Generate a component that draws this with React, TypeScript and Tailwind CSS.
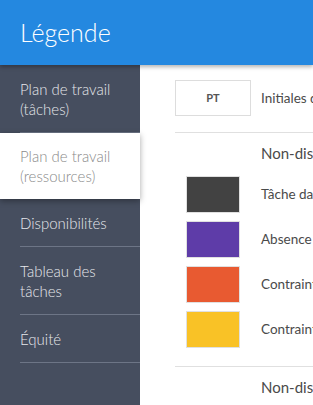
import React from 'react'

const navItems = [
  { label: ['Plan de travail', '(tâches)'], active: false },
  { label: ['Plan de travail', '(ressources)'], active: true },
  { label: ['Disponibilités'], active: false },
  { label: ['Tableau des', 'tâches'], active: false },
  { label: ['Équité'], active: false },
]

const swatches = [
  { color: 'bg-[#424242]', label: 'Tâche dans un autre projet' },
  { color: 'bg-[#5e3ca8]', label: 'Absence' },
  { color: 'bg-[#e85a31]', label: 'Contrainte forte' },
  { color: 'bg-[#f9c226]', label: 'Contrainte faible' },
]

export default function App() {
  return (
    <div className="h-[405px] w-[313px] overflow-hidden bg-white font-['Lato','Noto_Sans',sans-serif]">
      <header className="relative z-20 flex h-[65px] items-center bg-[#2488e0] pl-[20px] shadow-[0_2px_4px_rgba(0,0,0,0.3)]">
        <h1 className="text-[25px] font-light leading-none text-white">Légende</h1>
      </header>

      <div className="flex h-[340px]">
        <nav className="relative z-10 w-[140px] shrink-0 bg-[#464e5f] font-light">
          {navItems.map((item, i) => (
            <div
              key={i}
              className={
                item.active
                  ? 'relative bg-white pb-[13px] pl-[20px] pt-[13px] text-[15px] leading-[20px] text-[#8a8a8a] shadow-[0_2px_6px_rgba(0,0,0,0.35)]'
                  : 'pl-[20px] text-[15px] leading-[20px] text-[#e6e8ec]'
              }
            >
              {item.active ? (
                item.label.map((l) => <div key={l}>{l}</div>)
              ) : (
                <div className="border-b border-[#6d7586] pb-[13px] pt-[14px]">
                  {item.label.map((l) => (
                    <div key={l}>{l}</div>
                  ))}
                </div>
              )}
            </div>
          ))}
        </nav>

        <main className="flex-1 whitespace-nowrap pl-[35px] text-[#4a4a4a]">
          <div className="flex items-center pt-[15px] pb-[16px]">
            <div className="flex h-[36px] w-[76px] shrink-0 items-center justify-center border border-[#dddddd] text-[11px] font-bold text-[#555555]">
              PT
            </div>
            <span className="ml-[10px] text-[13.5px]">Initiales de la ressource</span>
          </div>

          <div className="border-t border-[#e0e0e0] pt-[10px]">
            <div className="pl-[86px] text-[15px] leading-[20px] text-[#4a4a4a]">Non-disponibilités</div>
            <div className="mt-[13px] flex flex-col gap-[8px]">
              {swatches.map((s) => (
                <div key={s.label} className="flex items-center">
                  <div className="flex w-[76px] shrink-0 justify-center">
                    <div className={`h-[37px] w-[54px] border border-[#e0e0e0] ${s.color}`} />
                  </div>
                  <span className="ml-[10px] text-[13.5px]">{s.label}</span>
                </div>
              ))}
            </div>
          </div>

          <div className="mt-[18px] border-t border-[#e0e0e0] pt-[10px]">
            <div className="pl-[86px] text-[15px] leading-[20px]">Non-disponibilités</div>
          </div>
        </main>
      </div>
    </div>
  )
}
